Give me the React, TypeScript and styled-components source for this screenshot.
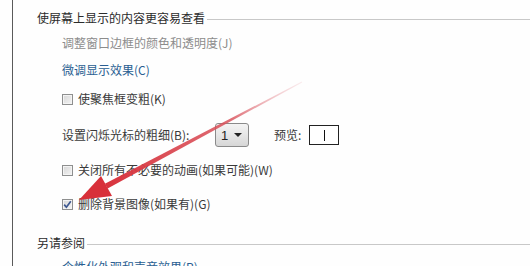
import React from "react";
import styled, { createGlobalStyle } from "styled-components";

const Global = createGlobalStyle`
  html, body { margin: 0; padding: 0; background: #fefefe; }
  body { width: 530px; height: 266px; overflow: hidden; }
  * { box-sizing: border-box; }
`;

const Page = styled.div`
  position: relative;
  width: 530px;
  height: 266px;
  overflow: hidden;
  padding-left: 12px;
  background: #fefefe;
  font-family: "Noto Sans CJK SC", "Microsoft YaHei", sans-serif;
  font-size: 12px;
  color: #333;
`;

const Panel = styled.div`
  height: 100%;
  border-left: 1px solid #5a5a5a;
  padding: 6px 0 0 24px;
  display: flex;
  flex-direction: column;
`;

const Row = styled.div<{ $mt?: number; $h?: number; $indent?: boolean }>`
  display: flex;
  align-items: center;
  flex-shrink: 0;
  height: ${(p) => p.$h ?? 24}px;
  margin-top: ${(p) => p.$mt ?? 0}px;
  padding-left: ${(p) => (p.$indent ? 25 : 0)}px;
  white-space: nowrap;
`;

const HeadText = styled.span`
  color: #2b2b2b;
  line-height: 1;
`;

const Rule = styled.div`
  flex: 1;
  height: 1px;
  background: #c8c8c8;
  margin: 2px 0 0 2px;
`;

const Text = styled.span<{ $tone?: "gray" | "link" | "normal" }>`
  line-height: 1;
  color: ${(p) =>
    p.$tone === "gray" ? "#8c8c8c" : p.$tone === "link" ? "#2a5e92" : "#3a3a3a"};
`;

const Box = styled.span`
  display: inline-flex;
  align-items: center;
  justify-content: center;
  width: 11px;
  height: 11px;
  border: 1px solid #8e8f8f;
  background: linear-gradient(135deg, #d6d6d6, #f4f4f4);
  box-shadow: inset 0 0 0 1px #f4f4f4;
  margin-right: 5px;
`;

const Label = styled(Text)`
  display: inline-block;
  width: 153px;
`;

const Select = styled.div`
  display: flex;
  align-items: center;
  justify-content: space-between;
  width: 34px;
  height: 24px;
  padding: 0 6px 0 5px;
  border: 1px solid #8a8a8a;
  border-radius: 3px;
  background: linear-gradient(#f4f4f4, #e6e6e6 50%, #d6d6d6);
  color: #222;
  font-family: "Liberation Sans", sans-serif;
  font-size: 13px;
`;

const Caret = styled.span`
  width: 0;
  height: 0;
  border-left: 4px solid transparent;
  border-right: 4px solid transparent;
  border-top: 4px solid #222;
`;

const PreviewLabel = styled(Text)`
  margin-left: 25px;
`;

const Preview = styled.div`
  display: flex;
  align-items: center;
  justify-content: center;
  width: 30px;
  height: 20px;
  margin-left: 8px;
  border: 1px solid #222;
  background: #fff;
`;

const CursorLine = styled.div`
  width: 1px;
  height: 11px;
  background: #111;
`;

const Overlay = styled.svg`
  position: absolute;
  left: 0;
  top: 0;
  pointer-events: none;
`;

const Check = ({ checked }: { checked?: boolean }) => (
  <Box>
    {checked && (
      <svg width="9" height="9" viewBox="0 0 9 9">
        <path d="M1.2 4.6 L3.4 7.2 L7.8 1.2" fill="none" stroke="#3d5890" strokeWidth="1.7" />
      </svg>
    )}
  </Box>
);

export default function App() {
  return (
    <>
      <Global />
      <Page>
        <Panel>
          <Row>
            <HeadText>使屏幕上显示的内容更容易查看</HeadText>
            <Rule />
          </Row>
          <Row $mt={1} $indent>
            <Text $tone="gray">调整窗口边框的颜色和透明度(J)</Text>
          </Row>
          <Row $mt={3} $indent>
            <Text $tone="link">微调显示效果(C)</Text>
          </Row>
          <Row $mt={5} $indent>
            <Check />
            <Text>使聚焦框变粗(K)</Text>
          </Row>
          <Row $mt={11} $h={26} $indent>
            <Label>设置闪烁光标的粗细(B):</Label>
            <Select>
              1
              <Caret />
            </Select>
            <PreviewLabel>预览:</PreviewLabel>
            <Preview>
              <CursorLine />
            </Preview>
          </Row>
          <Row $mt={10} $indent>
            <Check />
            <Text>关闭所有不必要的动画(如果可能)(W)</Text>
          </Row>
          <Row $mt={10} $indent>
            <Check checked />
            <Text>删除背景图像(如果有)(G)</Text>
          </Row>
          <Row $mt={15}>
            <HeadText>另请参阅</HeadText>
            <Rule />
          </Row>
          <Row $mt={0} $indent>
            <Text $tone="link">个性化外观和声音效果(P)</Text>
          </Row>
        </Panel>
        <Overlay width="530" height="266" viewBox="0 0 530 266">
          <defs>
            <linearGradient id="arrowGrad" x1="302" y1="82" x2="100" y2="190" gradientUnits="userSpaceOnUse">
              <stop offset="0" stopColor="#f0c0c6" stopOpacity="0.3" />
              <stop offset="0.35" stopColor="#d9535c" stopOpacity="0.85" />
              <stop offset="1" stopColor="#d8303a" />
            </linearGradient>
          </defs>
          <polygon
            points="302.2,82.4 301.8,81.6 104.9,183.7 107.6,188.4"
            fill="url(#arrowGrad)"
          />
          <polygon points="79,200 112,196 101,176" fill="#d8303a" />
        </Overlay>
      </Page>
    </>
  );
}
